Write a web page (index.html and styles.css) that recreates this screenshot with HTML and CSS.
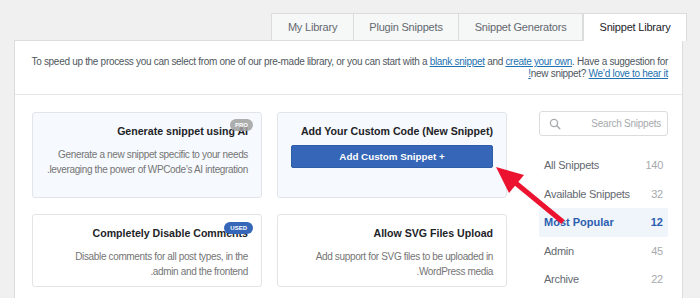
FILE: index.html
```html
<!DOCTYPE html>
<html lang="en" dir="rtl">
<head>
  <meta charset="UTF-8">
  <title>Snippet Library</title>
  <link rel="stylesheet" href="styles.css">
</head>
<body>
  <div class="tabs">
    <a class="tab activo">Snippet Library</a>
    <a class="tab">Snippet Generators</a>
    <a class="tab">Plugin Snippets</a>
    <a class="tab">My Library</a>
  </div>

  <div class="panel">
    <p class="intro">
      To speed up the process you can select from one of our pre-made library, or you can start with a
      <a href="#">blank snippet</a> and <a href="#">create your own</a>. Have a suggestion for new snippet?
      <a href="#">We’d love to hear it!</a>
    </p>

    <div class="contenido">
      <!-- barra lateral -->
      <aside class="lateral">
        <div class="buscar">
          <input type="text" placeholder="Search Snippets">
          <svg class="lupa" width="12" height="12" viewBox="0 0 12 12">
            <circle cx="5" cy="5" r="3.6" fill="none" stroke="#a7aaad" stroke-width="1.3"/>
            <line x1="7.6" y1="7.6" x2="10.8" y2="10.8" stroke="#a7aaad" stroke-width="1.4" stroke-linecap="round"/>
          </svg>
        </div>
        <ul class="categorias">
          <li><span class="num">140</span><span>All Snippets</span></li>
          <li><span class="num">32</span><span>Available Snippets</span></li>
          <li class="activo"><span class="num">12</span><span>Most Popular</span></li>
          <li><span class="num">45</span><span>Admin</span></li>
          <li><span class="num">22</span><span>Archive</span></li>
        </ul>
      </aside>

      <div class="tarjetas">
        <div class="tarjeta azul">
          <h3>Add Your Custom Code (New Snippet)</h3>
          <button class="boton">+ Add Custom Snippet</button>
        </div>
        <div class="tarjeta azul">
          <h3>Generate snippet using AI</h3>
          <span class="insignia pro">PRO</span>
          <p>Generate a new snippet specific to your needs leveraging the power of WPCode’s AI integration.</p>
        </div>
        <div class="tarjeta baja">
          <h3>Allow SVG Files Upload</h3>
          <p>Add support for SVG files to be uploaded in WordPress media.</p>
        </div>
        <div class="tarjeta baja">
          <h3>Completely Disable Comments</h3>
          <span class="insignia usado">USED</span>
          <p>Disable comments for all post types, in the<br>admin and the frontend.</p>
        </div>
      </div>
    </div>
  </div>

  <!-- flecha roja encima -->
  <svg class="flecha" width="700" height="298" viewBox="0 0 700 298">
    <line x1="563" y1="222" x2="512" y2="180" stroke="#ec1330" stroke-width="5"/>
    <polygon points="496,167 524,175 509,193" fill="#ec1330"/>
  </svg>
</body>
</html>
```

FILE: styles.css
```css
html {
  overflow: hidden;
}

body {
  margin: 0;
  padding: 13px 13px 0 0;
  background: #f0f0f1;
  font-family: 'Liberation Sans', Arial, sans-serif;
  color: #50575e;
  overflow: hidden;
  height: 298px;
  box-sizing: border-box;
}

.tabs {
  display: flex;
  height: 27px;
}

.tab {
  display: block;
  box-sizing: border-box;
  height: 27px;
  line-height: 26px;
  padding: 0 15.5px;
  font-size: 11px;
  letter-spacing: -0.2px;
  color: #646970;
  background: #f6f7f7;
  border: 1px solid #dcdcde;
  border-bottom: none;
  margin-left: -1px;
}

.tab:first-child {
  margin-left: 0;
}

.tab.activo {
  background: #fff;
  color: #1d2327;
  position: relative;
  z-index: 2;
  height: 28px;
}

.panel {
  margin-right: 4px;
  margin-left: 14px;
  background: #fff;
  border: 1px solid #dcdcde;
}

.intro {
  margin: 0;
  padding: 15px 14px 14px;
  font-size: 10px;
  letter-spacing: -0.3px;
  line-height: 12px;
  border-bottom: 1px solid #e6e7e8;
}

.intro a {
  color: #2271b1;
}

.contenido {
  display: flex;
  gap: 32px;
  padding: 17px 14px 20px 17px;
}

.lateral {
  width: 129px;
  flex-shrink: 0;
}

.buscar {
  display: flex;
  align-items: center;
  height: 25px;
  box-sizing: border-box;
  border: 1px solid #dcdcde;
  border-radius: 3px;
  padding: 0 6px 0 9px;
  margin-top: -1px;
}

.buscar input {
  flex: 1;
  min-width: 0;
  border: none;
  outline: none;
  padding: 0;
  font-family: inherit;
  font-size: 10px;
  letter-spacing: -0.25px;
  background: transparent;
}

.buscar input::placeholder {
  color: #a7aaad;
}

.lupa {
  flex-shrink: 0;
}

.categorias {
  list-style: none;
  margin: 15px 0 0;
  padding: 0;
}

.categorias li {
  display: flex;
  justify-content: space-between;
  align-items: center;
  height: 28.5px;
  padding: 0 5px;
  font-size: 11px;
  letter-spacing: -0.25px;
  color: #646970;
}

.categorias .num {
  color: #a7aaad;
}

.categorias li.activo {
  background: #f0f5fb;
  color: #2c5eb0;
  font-weight: bold;
  letter-spacing: 0;
}

.categorias li.activo .num {
  color: #2c5eb0;
}

.tarjetas {
  display: grid;
  grid-template-columns: 230px 230px;
  column-gap: 15px;
  row-gap: 16px;
  align-content: start;
}

.tarjeta {
  position: relative;
  box-sizing: border-box;
  height: 86px;
  padding: 11px 13px 0;
  border: 1px solid #e2e4e7;
  border-radius: 3px;
  background: #fff;
}

.tarjeta.azul {
  background: #f6f9fd;
}

.tarjeta.baja {
  height: 73px;
}

.tarjeta h3 {
  margin: 0;
  font-size: 10.6px;
  line-height: 14px;
  color: #1d2327;
}

.tarjeta p {
  margin: 9px 0 0;
  font-size: 10px;
  letter-spacing: -0.35px;
  line-height: 15px;
  color: #757575;
}

.insignia {
  position: absolute;
  top: 6px;
  right: 8px;
  height: 12px;
  line-height: 12px;
  padding: 0 5px;
  border-radius: 6px;
  font-size: 6px;
  font-weight: bold;
  color: #fff;
}

.insignia.pro {
  background: #a0a0a0;
  opacity: 0.85;
}

.insignia.usado {
  background: #3566b8;
  top: 7px;
  padding: 0 6px;
}

.boton {
  display: block;
  width: 100%;
  height: 23px;
  margin-top: 7px;
  border: 1px solid #2f5ea9;
  border-radius: 2px;
  background: #3566b8;
  color: #fff;
  font-family: inherit;
  font-size: 9.8px;
  font-weight: bold;
}

.flecha {
  position: absolute;
  top: 0;
  left: 0;
  pointer-events: none;
}
```
